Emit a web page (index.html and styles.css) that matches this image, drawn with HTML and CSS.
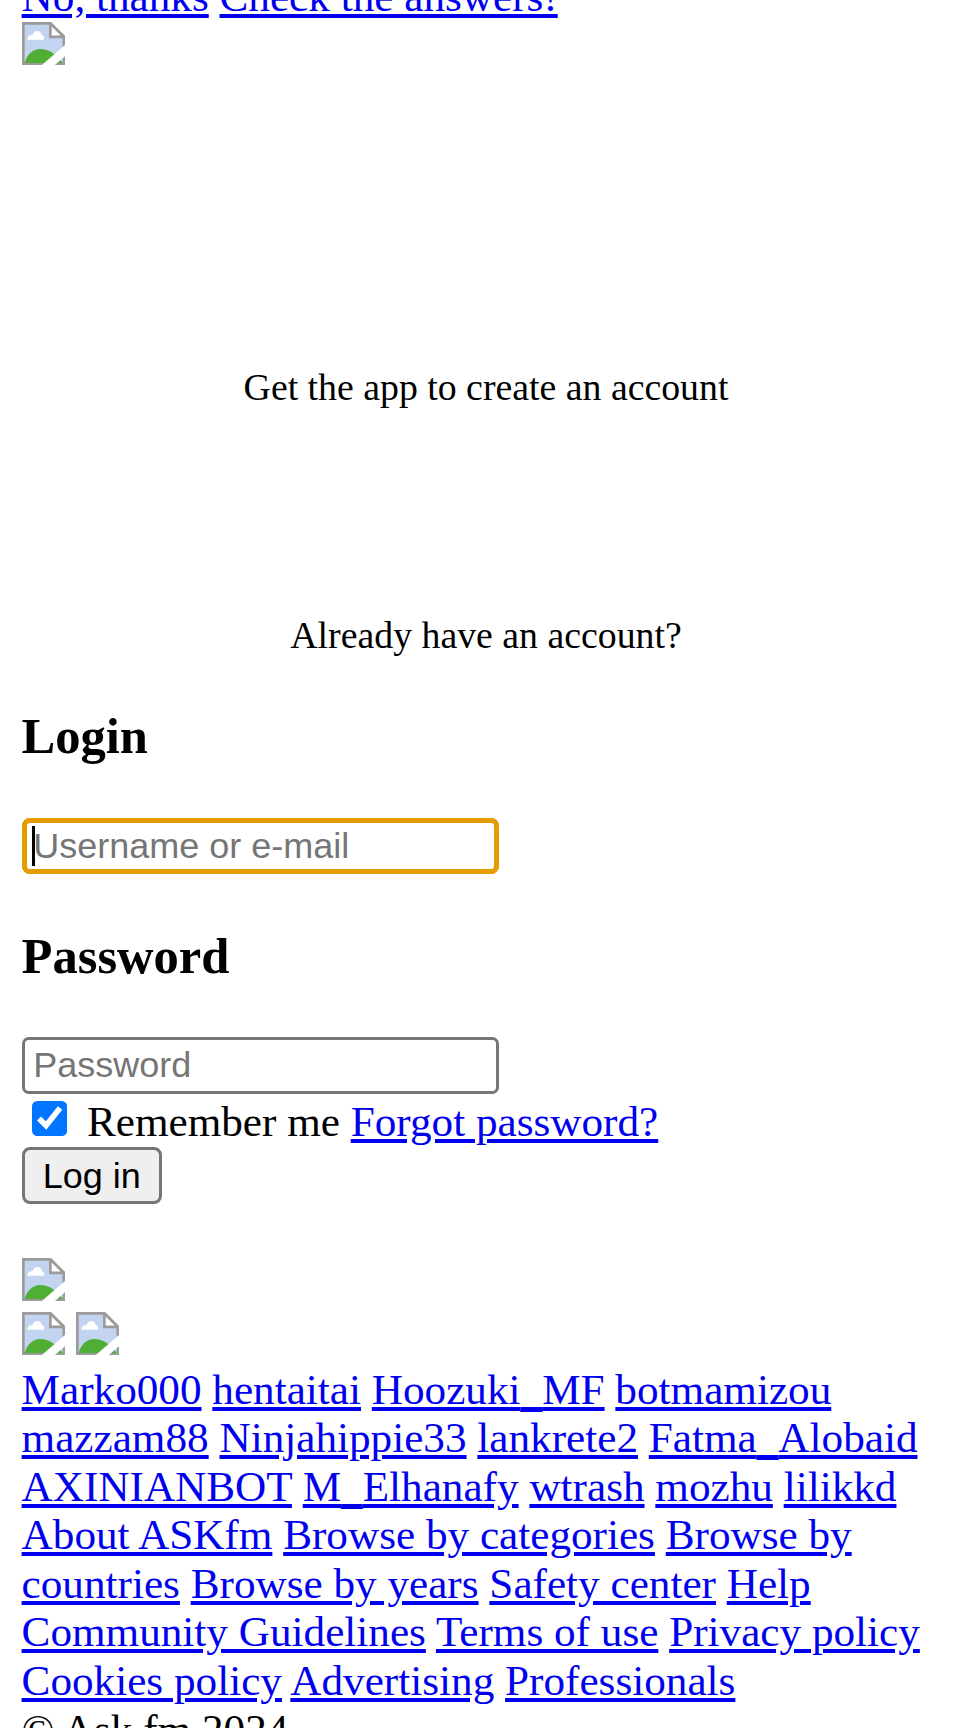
FILE: index.html
```html
<html>
<head>
<meta charset="utf-8">
<title>ASKfm</title>
<link rel="stylesheet" href="styles.css">
</head>
<body>
	<svg class="defs" width="0" height="0">
		<symbol id="broken" viewBox="0 0 16 16">
			<path d="M.5.5H10.5L15.5 5.5V15.5H.5Z" fill="#c3d4f0" stroke="#9b9b9b"/>
			<path d="M10.5.5V5.5H15.5Z" fill="#fff" stroke="#9b9b9b"/>
			<path d="M2 6.6C2 5.2 3.2 4.8 3.8 5 4.4 2.8 7 2.8 7.3 4.8 8 4.8 8.4 5.8 8.1 6.6Z" fill="#fff"/>
			<path d="M1 15.2C1.6 12.4 3.8 10 6.6 10 10 10 13.2 12.2 15 15.2Z" fill="#4fae33"/>
			<path d="M6.7 16.5 16.5 8V12.2L11.5 16.5Z" fill="#fff"/>
		</symbol>
	</svg>

	<div class="page">
		<div class="top-links">
			<a href="#">No, thanks</a>
			<a href="#">Check the answers!</a>
		</div>
		<div class="icon-row"><svg class="broken"><use href="#broken"/></svg></div>

		<div class="promo">Get the app to create an account</div>
		<div class="promo already">Already have an account?</div>

		<form>
			<h3>Login</h3>
			<div class="field">
				<input class="text-input focused" type="text" placeholder="Username or e-mail">
				<span class="caret"></span>
			</div>
			<h3>Password</h3>
			<div class="field">
				<input class="text-input" type="password" placeholder="Password">
			</div>
			<div class="remember">
				<input type="checkbox" id="remember" checked>
				<label for="remember">Remember me</label>
				<a href="#">Forgot password?</a>
			</div>
			<input class="submit" type="submit" value="Log in">
		</form>

		<div class="icon-row first"><svg class="broken"><use href="#broken"/></svg></div>
		<div class="icon-row pair">
			<svg class="broken"><use href="#broken"/></svg>
			<svg class="broken"><use href="#broken"/></svg>
		</div>

		<div class="users">
			<a href="#">Marko000</a>
			<a href="#">hentaitai</a>
			<a href="#">Hoozuki<span class="us">_</span>MF</a>
			<a href="#">botmamizou</a>
			<a href="#">mazzam88</a>
			<a href="#">Ninjahippie33</a>
			<a href="#">lankrete2</a>
			<a href="#">Fatma<span class="us">_</span>Alobaid</a>
			<a href="#">AXINIANBOT</a>
			<a href="#">M<span class="us">_</span>Elhanafy</a>
			<a href="#">wtrash</a>
			<a href="#">mozhu</a>
			<a href="#">lilikkd</a>
		</div>
		<div class="footer-links">
			<a href="#">About ASKfm</a>
			<a href="#">Browse by categories</a>
			<a href="#">Browse by countries</a>
			<a href="#">Browse by years</a>
			<a href="#">Safety center</a>
			<a href="#">Help</a>
			<a href="#">Community Guidelines</a>
			<a href="#">Terms of use</a>
			<a href="#">Privacy policy</a>
			<a href="#">Cookies policy</a>
			<a href="#">Advertising</a>
			<a href="#">Professionals</a>
		</div>
		<div class="copyright">&copy; Ask.fm 2024</div>
	</div>
</body>
</html>
```

FILE: styles.css
```css
html {
	zoom: 2.7;
	overflow: hidden;
	height: 640px;
}

body {
	margin: 0;
	height: 640px;
	overflow: hidden;
	background: #fff;
	color: #000;
	font-family: "Liberation Serif", serif;
	font-size: 16px;
}

a {
	color: #00e;
}

.defs {
	display: block;
	height: 0;
}

.page {
	margin-top: -10.5px;
	padding: 0 8px;
}

.top-links {
	height: 18px;
}

.icon-row {
	height: 20px;
	padding-top: .5px;
}

.icon-row.first {
	margin-top: 20px;
	padding-top: 0;
}

.icon-row.pair {
	height: 20px;
	padding-top: 0;
	display: flex;
	gap: 4px;
}

.broken {
	display: block;
	width: 16px;
	height: 16px;
}

.promo {
	margin-top: 107.6px;
	text-align: center;
	font-size: 14px;
	line-height: 16px;
}

.promo.already {
	margin-top: 75.7px;
}

form {
	margin-top: -.78px;
}

h3 {
	margin: 19px 0 18.9px;
	font-size: 18.72px;
	line-height: 22.4px;
}

.field {
	position: relative;
	height: 21px;
}

.text-input {
	display: block;
	box-sizing: border-box;
	width: 177px;
	height: 21px;
	padding: 1px 3.2px;
	border: 1.12px solid #767676;
	border-radius: 2.5px;
	font-family: "Liberation Sans", sans-serif;
	font-size: 13.333px;
}

.text-input.focused {
	outline: 2px solid #e59c00;
	outline-offset: -2px;
	border-color: #e59c00;
	border-radius: 3px;
}

.text-input::placeholder {
	color: #757575;
}

.caret {
	position: absolute;
	left: 3.9px;
	top: 3px;
	width: 1.12px;
	height: 15px;
	background: #000;
}

.remember {
	height: 20px;
	margin-top: -.2px;
}

.remember input {
	width: 13.2px;
	height: 13.2px;
	margin: 3px 3px 3px 4px;
	vertical-align: -.4px;
}

.submit {
	display: block;
	box-sizing: border-box;
	height: 21px;
	padding: 1px 6.7px;
	border: 1.12px solid #767676;
	border-radius: 3px;
	background: #efefef;
	color: #000;
	font-family: "Liberation Sans", sans-serif;
	font-size: 13.333px;
}

.users,
.footer-links {
	line-height: 17.96px;
}

.us {
	line-height: 0;
	vertical-align: -1.2px;
}
```
